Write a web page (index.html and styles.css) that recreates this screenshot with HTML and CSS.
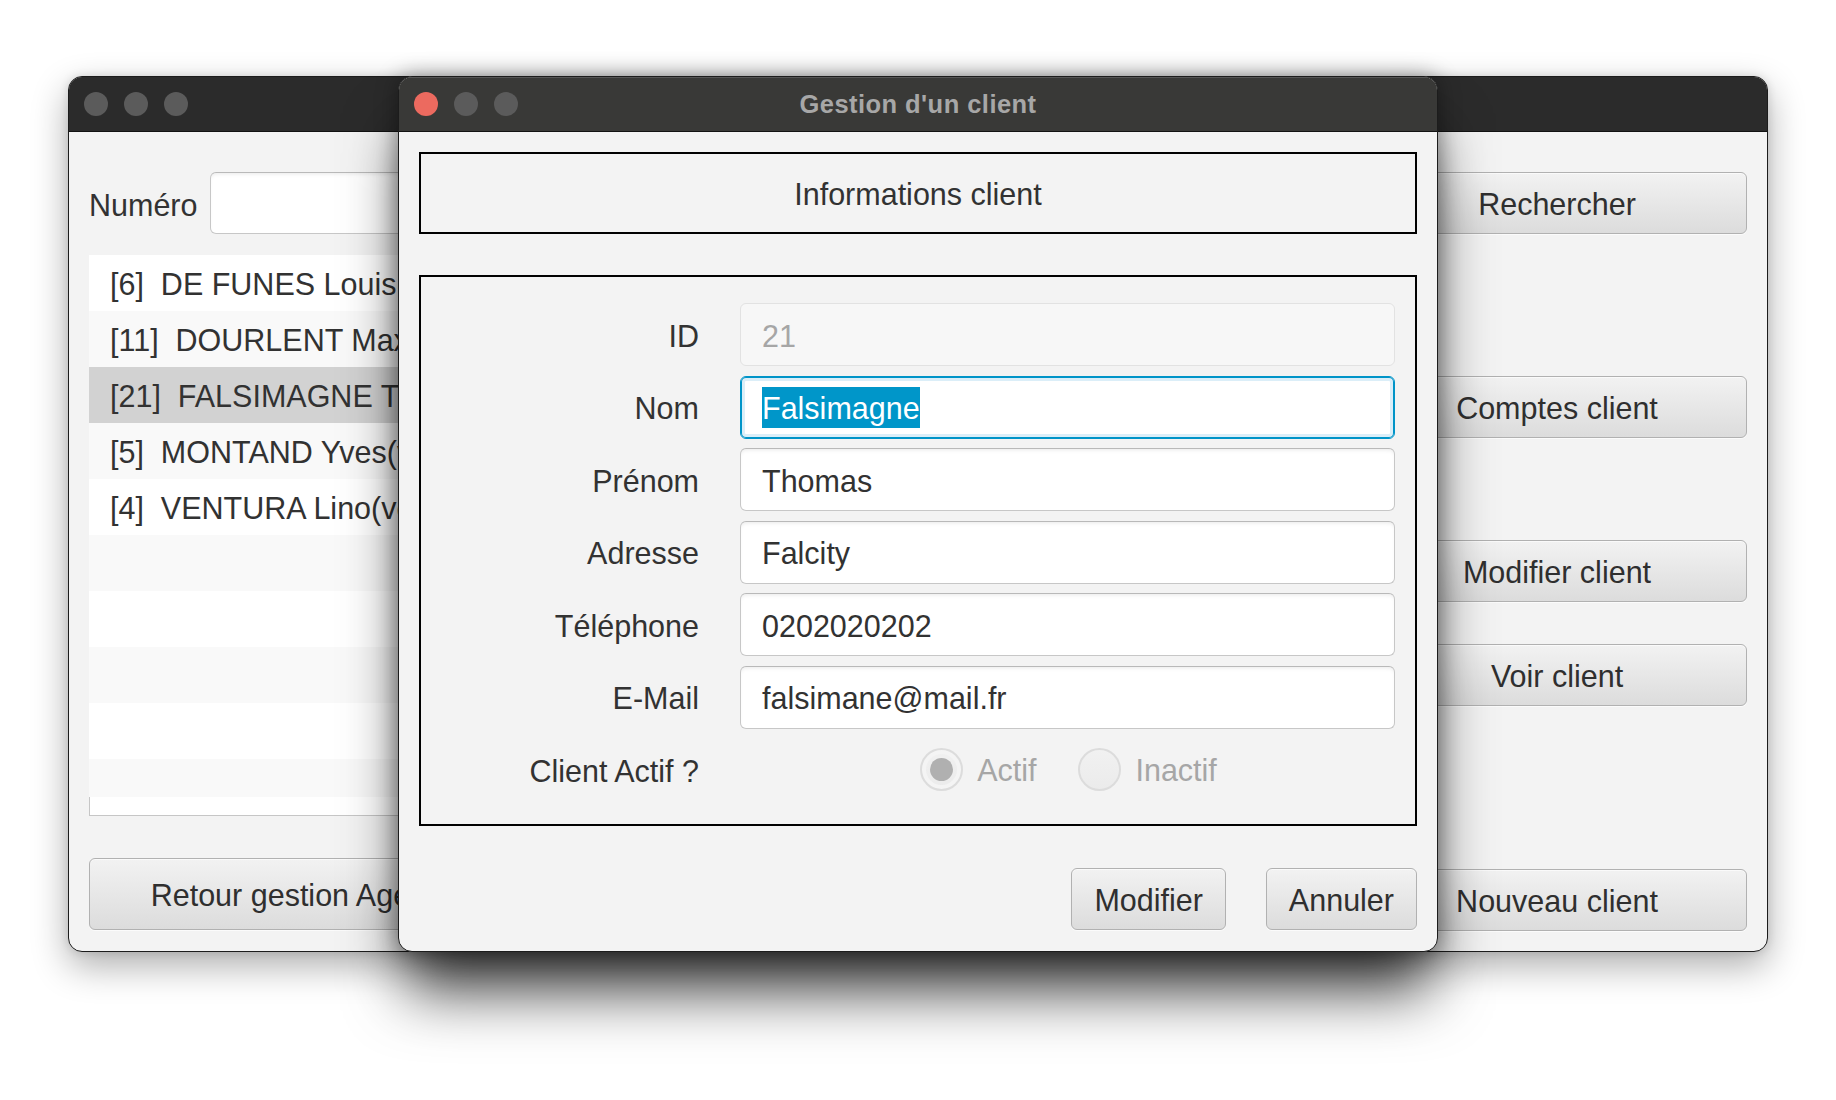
FILE: index.html
```html
<!DOCTYPE html>
<html lang="fr">
<head>
<meta charset="utf-8">
<title>Gestion d'un client</title>
<link rel="stylesheet" href="styles.css">
</head>
<body>
<div class="desktop">
  <div class="window main-window">
    <div class="titlebar main-titlebar">
      <div class="lights">
        <span class="light grey"></span>
        <span class="light grey"></span>
        <span class="light grey"></span>
      </div>
    </div>
    <div class="main-body">
      <div class="left-col">
        <div class="search-row">
          <span class="lbl">Numéro</span>
          <div class="field search-field"></div>
        </div>
        <div class="list">
          <div class="rows">
            <div class="row r-white">[6]  DE FUNES Louis(vedette)</div>
            <div class="row r-alt">[11]  DOURLENT Max(client)</div>
            <div class="row r-sel">[21]  FALSIMAGNE Thomas</div>
            <div class="row r-alt">[5]  MONTAND Yves(vedette)</div>
            <div class="row r-white">[4]  VENTURA Lino(vedette)</div>
            <div class="row r-alt"></div>
            <div class="row r-white"></div>
            <div class="row r-alt"></div>
            <div class="row r-white"></div>
            <div class="row r-alt r-last"></div>
          </div>
        </div>
        <button class="btn btn-back">Retour gestion Agence</button>
      </div>
      <div class="right-col">
        <button class="btn btn-side">Rechercher</button>
        <button class="btn btn-side gap-142">Comptes client</button>
        <button class="btn btn-side gap-102">Modifier client</button>
        <button class="btn btn-side gap-42">Voir client</button>
        <button class="btn btn-side gap-auto">Nouveau client</button>
      </div>
    </div>
  </div>

  <div class="window dialog">
    <div class="titlebar dialog-titlebar">
      <div class="lights">
        <span class="light red"></span>
        <span class="light grey"></span>
        <span class="light grey"></span>
      </div>
      <div class="title">Gestion d'un client</div>
      <div></div>
    </div>
    <div class="dialog-body">
      <div class="info-box">Informations client</div>
      <div class="form-box">
        <span class="flbl">ID</span>
        <div class="field disabled">21</div>
        <span class="flbl">Nom</span>
        <div class="field focused"><span class="selection">Falsimagne</span></div>
        <span class="flbl">Prénom</span>
        <div class="field">Thomas</div>
        <span class="flbl">Adresse</span>
        <div class="field">Falcity</div>
        <span class="flbl">Téléphone</span>
        <div class="field">0202020202</div>
        <span class="flbl">E-Mail</span>
        <div class="field">falsimane@mail.fr</div>
        <span class="flbl">Client Actif ?</span>
        <div class="radios">
          <div class="radio-item">
            <span class="radio checked"><span class="dot"></span></span>
            <span class="radio-text">Actif</span>
          </div>
          <div class="radio-item">
            <span class="radio"></span>
            <span class="radio-text">Inactif</span>
          </div>
        </div>
      </div>
      <div class="dialog-buttons">
        <button class="btn btn-dlg">Modifier</button>
        <button class="btn btn-dlg">Annuler</button>
      </div>
    </div>
  </div>
</div>
</body>
</html>
```

FILE: styles.css
```css
* {
  box-sizing: border-box;
}

html, body {
  margin: 0;
  padding: 0;
  background: #ffffff;
}

body {
  font-family: "Liberation Sans", Arial, sans-serif;
  font-size: 30.5px;
  color: #323232;
}

.desktop {
  position: relative;
  width: 1836px;
  height: 1100px;
  overflow: hidden;
  background: #ffffff;
}

.window {
  position: absolute;
  top: 76px;
  height: 876px;
  background: #f3f3f3;
  border: 1px solid #1c1c1c;
  border-radius: 14px;
  overflow: hidden;
  display: flex;
  flex-direction: column;
}

.main-window {
  left: 68px;
  width: 1700px;
  box-shadow: 0 14px 36px rgba(0, 0, 0, 0.32), 0 0 10px rgba(0, 0, 0, 0.12);
}

.dialog {
  left: 398px;
  width: 1040px;
  box-shadow: 0 0 22px rgba(0, 0, 0, 0.38), 0 48px 60px -8px rgba(0, 0, 0, 0.72);
}

.titlebar {
  height: 55px;
  flex: none;
  border-bottom: 1px solid #121212;
  display: grid;
  grid-template-columns: 1fr auto 1fr;
  align-items: center;
  padding-left: 15px;
}

.main-titlebar {
  background: #2b2b2b;
}

.dialog-titlebar {
  background: #393937;
  box-shadow: inset 0 1px 0 #555;
}

.lights {
  display: flex;
  gap: 16px;
  align-items: center;
}

.light {
  width: 24px;
  height: 24px;
  border-radius: 50%;
  display: block;
}

.light.grey {
  background: #5b5b5b;
}

.light.red {
  background: #ec6a5f;
}

.title {
  font-weight: bold;
  font-size: 25.5px;
  letter-spacing: 0.45px;
  color: #a7a7a7;
  text-align: center;
  margin-left: -15px;
}

/* ---------- main window ---------- */

.main-body {
  flex: 1;
  display: flex;
  padding: 40px 20px 20px 20px;
}

.left-col {
  width: 432px;
  display: flex;
  flex-direction: column;
}

.search-row {
  height: 62px;
  display: flex;
  align-items: center;
  gap: 13px;
}

.lbl {
  white-space: nowrap;
  padding-top: 4px;
}

.field {
  height: 63px;
  background: #ffffff;
  border: 1px solid #c7c7c7;
  border-top-color: #b9b9b9;
  border-radius: 6px;
  box-shadow: inset 0 3px 4px -2px rgba(0, 0, 0, 0.09);
  display: flex;
  align-items: center;
  padding-left: 21px;
  padding-top: 3px;
  white-space: nowrap;
  overflow: hidden;
}

.search-field {
  flex: 1;
  height: 62px;
}

.list {
  margin-top: 21px;
  height: 561px;
  background: #ffffff;
  border-left: 1px solid #c6c6c6;
  border-bottom: 1px solid #c6c6c6;
}

.rows {
  margin-left: -1px;
}

.row {
  height: 56px;
  display: flex;
  align-items: center;
  padding-left: 21px;
  padding-top: 2px;
  white-space: pre;
}

.row.r-last {
  height: 38px;
}

.r-white {
  background: #ffffff;
}

.r-alt {
  background: #f9f9f9;
}

.r-sel {
  background: #d2d2d2;
}

.btn {
  font-family: "Liberation Sans", Arial, sans-serif;
  font-size: 30.5px;
  color: #2f2f2f;
  background: linear-gradient(#f2f2f2, #dcdcdc);
  border: 1px solid #b1b1b1;
  border-radius: 6px;
  box-shadow: 0 1px 0 #fbfbfb, inset 0 1px 0 #fafafa;
  height: 62px;
  padding: 3px 22px 0 22px;
  white-space: nowrap;
  cursor: default;
}

.btn-back {
  margin-top: 42px;
  height: 72px;
  width: 432px;
}

.right-col {
  margin-left: auto;
  width: 380px;
  display: flex;
  flex-direction: column;
}

.btn-side {
  width: 380px;
  flex: none;
}

.gap-142 {
  margin-top: 142px;
}

.gap-102 {
  margin-top: 102px;
}

.gap-42 {
  margin-top: 42px;
}

.gap-auto {
  margin-top: auto;
}

/* ---------- dialog ---------- */

.dialog-body {
  flex: 1;
  display: flex;
  flex-direction: column;
  padding: 20px;
}

.info-box {
  height: 82px;
  border: 2px solid #000;
  display: flex;
  align-items: center;
  justify-content: center;
  padding-top: 2px;
}

.form-box {
  margin-top: 41px;
  height: 551px;
  border: 2px solid #000;
  padding: 26px 20px 23px 0;
  display: grid;
  grid-template-columns: 278px 655px;
  grid-auto-rows: 63px;
  column-gap: 41px;
  row-gap: 9.5px;
  align-items: center;
}

.flbl {
  text-align: right;
  white-space: nowrap;
  padding-top: 3px;
}

.field.disabled {
  background: #f7f7f7;
  border-color: #e2e2e2;
  box-shadow: none;
  color: #a6a6a6;
}

.field.focused {
  border-color: #0094c8;
  box-shadow: inset 0 0 0 1px #0094c8, inset 0 0 0 4px #dbeef8;
  padding-top: 0;
}

.selection {
  background: #0096c9;
  color: #ffffff;
  line-height: 39px;
  display: inline-block;
  padding-top: 2px;
}

.radios {
  display: flex;
  justify-content: center;
  align-items: center;
  gap: 42px;
  padding-left: 2px;
}

.radio-item {
  display: flex;
  align-items: center;
  gap: 14px;
  color: #a6a6a6;
}

.radio-text {
  padding-top: 2px;
}

.radio {
  width: 43px;
  height: 43px;
  border-radius: 50%;
  border: 2px solid #dcdcdc;
  background: linear-gradient(#f1f1f1, #ebebeb);
  display: flex;
  align-items: center;
  justify-content: center;
}

.radio.checked {
  box-shadow: inset 0 0 0 4px #f4f4f4;
}

.dot {
  width: 23px;
  height: 23px;
  border-radius: 50%;
  background: #b0b0b0;
}

.dialog-buttons {
  margin-top: 42px;
  display: flex;
  justify-content: flex-end;
  gap: 40px;
}

.btn-dlg {
  height: 62px;
}
```
